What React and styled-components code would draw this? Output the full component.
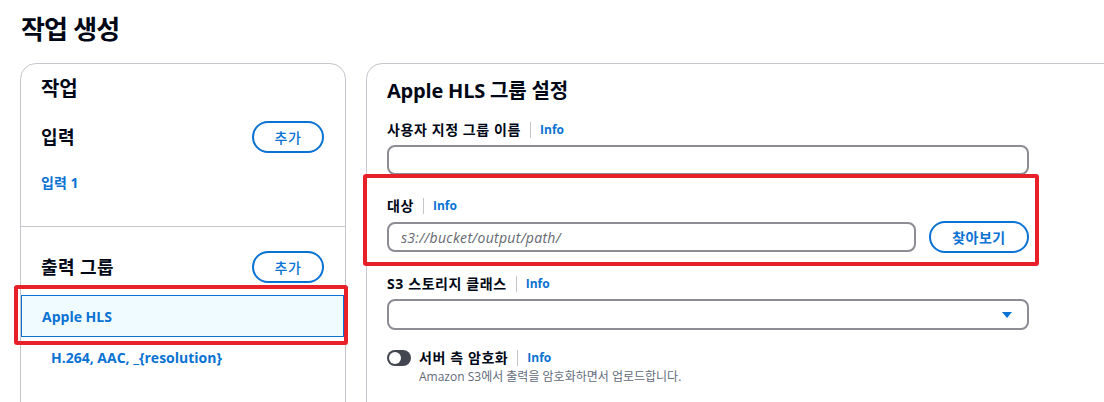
import React from 'react'
import styled, { createGlobalStyle } from 'styled-components'

const GlobalStyle = createGlobalStyle`
  html, body {
    margin: 0;
    padding: 0;
    background: #ffffff;
    overflow: hidden;
  }
  body {
    font-family: 'Open Sans', 'Noto Sans CJK KR', sans-serif;
    color: #000716;
  }
`

const BLUE = '#0972d3'

export default function App() {
  return (
    <>
      <GlobalStyle />
      <Page>
        <Title>작업 생성</Title>
        <Layout>
          <SidePanel>
            <PanelTitle $side>작업</PanelTitle>
            <Section>
              <SectionHead>
                <SectionTitle>입력</SectionTitle>
                <PillButton>추가</PillButton>
              </SectionHead>
              <NavLink>입력 1</NavLink>
            </Section>
            <Divider />
            <Section $bottom>
              <SectionHead>
                <SectionTitle>출력 그룹</SectionTitle>
                <PillButton>추가</PillButton>
              </SectionHead>
            </Section>
            <NavList>
              <NavItem $selected>Apple HLS</NavItem>
              <NavItem $nested>H.264, AAC, _{'{resolution}'}</NavItem>
            </NavList>
            <Highlight style={{ left: -7, top: 221, width: 334, height: 60 }} />
          </SidePanel>

          <MainPanel>
            <PanelTitle>Apple HLS 그룹 설정</PanelTitle>
            <Fields>
              <Field>
                <Label>
                  사용자 지정 그룹 이름<Sep /><Info>Info</Info>
                </Label>
                <Input />
              </Field>
              <Field>
                <Label>
                  대상<Sep /><Info>Info</Info>
                </Label>
                <InputRow>
                  <Input placeholder="s3://bucket/output/path/" />
                  <PillButton $wide>찾아보기</PillButton>
                </InputRow>
              </Field>
              <Field>
                <Label>
                  S3 스토리지 클래스<Sep /><Info>Info</Info>
                </Label>
                <Select>
                  <Caret viewBox="0 0 16 16">
                    <path d="M3 5h10l-5 6z" fill={BLUE} />
                  </Caret>
                </Select>
              </Field>
              <ToggleField>
                <Toggle />
                <div>
                  <Label>
                    서버 측 암호화<Sep /><Info>Info</Info>
                  </Label>
                  <Description>Amazon S3에서 출력을 암호화하면서 업로드합니다.</Description>
                </div>
              </ToggleField>
            </Fields>
            <Highlight style={{ left: -4, top: 110, width: 676, height: 92 }} />
          </MainPanel>
        </Layout>
      </Page>
    </>
  )
}

const Page = styled.div`
  padding: 12px 0 0 20px;
  height: 402px;
  box-sizing: border-box;
`

const Title = styled.h1`
  margin: 0 0 17px 1px;
  font-size: 26px;
  line-height: 34px;
  font-weight: 700;
  letter-spacing: -0.8px;
`

const Layout = styled.div`
  display: grid;
  grid-template-columns: 326px 800px;
  column-gap: 20px;
  align-items: start;
`

const Panel = styled.div`
  position: relative;
  border: 1px solid #c6c6cd;
  border-radius: 16px;
  min-height: 400px;
  box-sizing: border-box;
`

const SidePanel = styled(Panel)`
  padding: 13px 0 0;
`

const MainPanel = styled(Panel)`
  padding: 15px 20px 0;
`

const PanelTitle = styled.h2`
  margin: 0;
  padding-left: ${p => (p.$side ? '20px' : '0')};
  font-size: 20px;
  line-height: 24px;
  font-weight: 700;
  letter-spacing: -0.2px;
`

const Section = styled.div`
  padding: ${p => (p.$bottom ? '24px 20px 12px' : '20px 20px 33px')};
`

const SectionHead = styled.div`
  display: flex;
  align-items: center;
  justify-content: space-between;
  padding-right: 1px;
`

const SectionTitle = styled.h3`
  margin: 0;
  font-size: 18px;
  line-height: 22px;
  font-weight: 700;
  letter-spacing: 0.4px;
`

const PillButton = styled.button`
  box-sizing: border-box;
  height: 32px;
  width: ${p => (p.$wide ? '100px' : '72px')};
  flex-shrink: 0;
  border: 2px solid ${BLUE};
  border-radius: 20px;
  background: #ffffff;
  color: ${BLUE};
  font-family: 'Open Sans', 'Noto Sans CJK KR', sans-serif;
  font-size: 14px;
  font-weight: ${p => (p.$wide ? 700 : 500)};
  letter-spacing: 0.5px;
  padding: 0;
  cursor: pointer;
`

const NavLink = styled.a`
  display: block;
  margin-top: 20px;
  font-size: 14px;
  line-height: 20px;
  font-weight: 700;
  color: ${BLUE};
`

const Divider = styled.div`
  height: 1px;
  background: #c6c6cd;
`

const NavList = styled.div`
  display: flex;
  flex-direction: column;
`

const NavItem = styled.div`
  box-sizing: border-box;
  height: ${p => (p.$selected ? '42px' : '40px')};
  display: flex;
  align-items: center;
  padding-left: ${p => (p.$nested ? '30px' : '20px')};
  margin-right: 1px;
  font-size: 14px;
  font-weight: 700;
  color: ${BLUE};
  background: ${p => (p.$selected ? '#f0fbff' : 'transparent')};
  border: ${p => (p.$selected ? `1px solid ${BLUE}` : 'none')};
`

const Highlight = styled.div`
  position: absolute;
  box-sizing: border-box;
  border: 4px solid #e8202a;
  border-radius: 3px;
  pointer-events: none;
`

const Fields = styled.div`
  max-width: 642px;
  display: flex;
  flex-direction: column;
  gap: 20px;
  margin-top: 16px;
`

const Field = styled.div`
  display: flex;
  flex-direction: column;
  gap: 4px;
`

const Label = styled.div`
  display: flex;
  align-items: center;
  font-size: 14px;
  line-height: 22px;
  font-weight: 700;
  letter-spacing: 0.6px;
`

const Sep = styled.span`
  display: inline-block;
  width: 1px;
  height: 16px;
  background: #c6c6cd;
  margin: 0 9px 0 9px;
`

const Info = styled.a`
  font-size: 12px;
  font-weight: 700;
  letter-spacing: 0;
  color: ${BLUE};
`

const Input = styled.input`
  box-sizing: border-box;
  width: 100%;
  height: 30px;
  border: 2px solid #8c8c94;
  border-radius: 8px;
  padding: 0 12px;
  font-family: 'Open Sans', 'Noto Sans CJK KR', sans-serif;
  font-size: 14px;
  &::placeholder {
    color: #656871;
    font-style: italic;
    letter-spacing: 0.3px;
  }
`

const InputRow = styled.div`
  display: flex;
  align-items: center;
  gap: 13px;
`

const Select = styled.div`
  box-sizing: border-box;
  height: 31px;
  border: 2px solid #8c8c94;
  border-radius: 8px;
  display: flex;
  align-items: center;
  justify-content: flex-end;
  padding-right: 12px;
`

const Caret = styled.svg`
  width: 16px;
  height: 16px;
`

const ToggleField = styled.div`
  display: flex;
  align-items: flex-start;
  gap: 8px;
  margin-top: -3px;
`

const Toggle = styled.span`
  position: relative;
  flex-shrink: 0;
  width: 24px;
  height: 16px;
  margin-top: 3px;
  border-radius: 8px;
  background: #424650;
  &::after {
    content: '';
    position: absolute;
    left: 2px;
    top: 2px;
    width: 12px;
    height: 12px;
    border-radius: 50%;
    background: #ffffff;
  }
`

const Description = styled.div`
  font-size: 12px;
  line-height: 16px;
  color: #5f6b7a;
`
